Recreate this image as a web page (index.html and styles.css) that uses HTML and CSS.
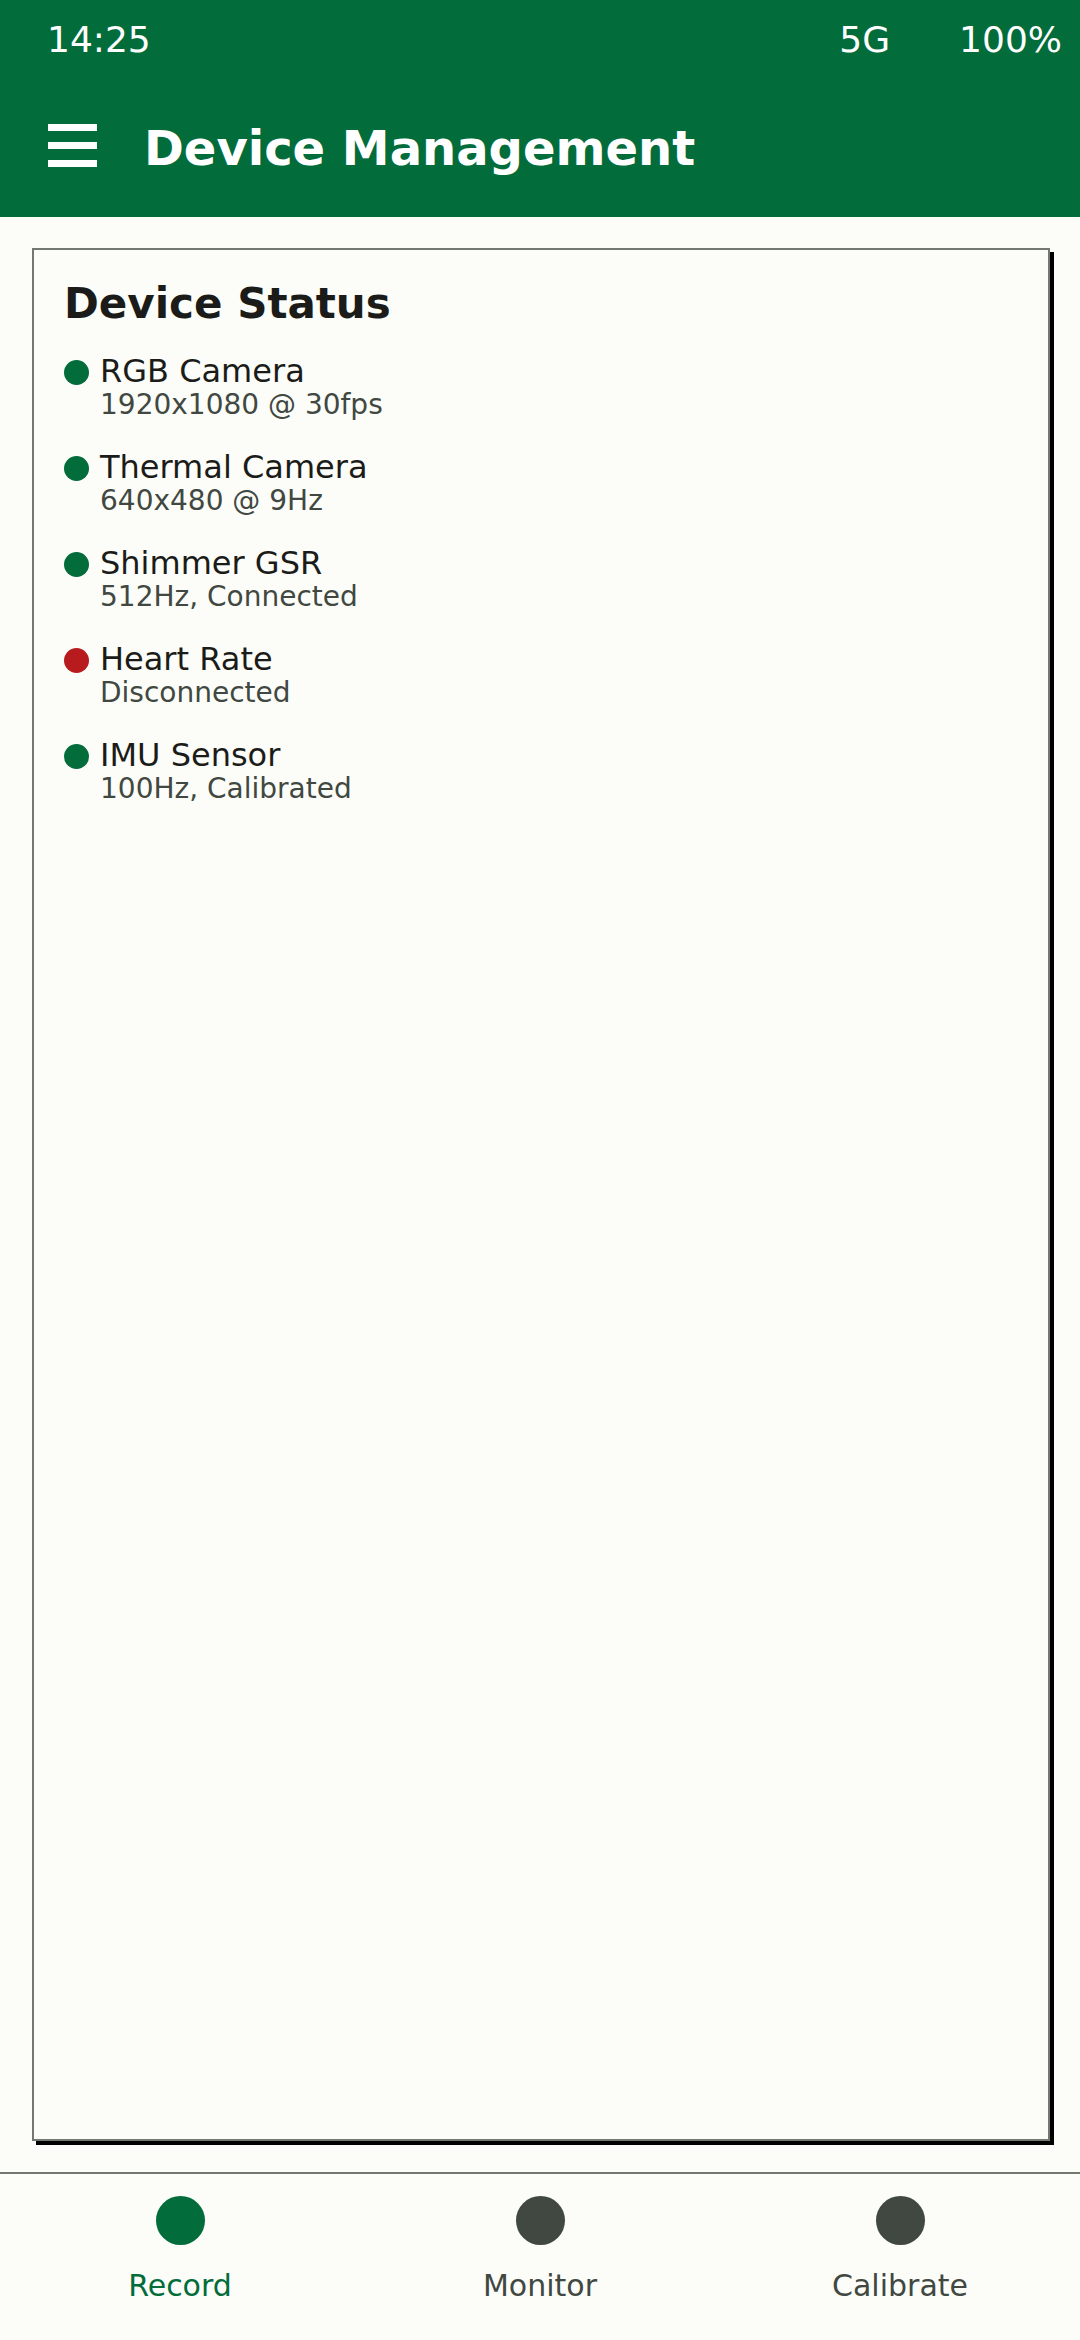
FILE: index.html
```html
<!DOCTYPE html>
<html lang="en">
<head>
<meta charset="utf-8">
<title>Device Management</title>
<link rel="stylesheet" href="styles.css">
</head>
<body>
<div class="app">
  <header class="appbar">
    <div class="statusbar">
      <span class="time">14:25</span>
      <span class="spacer"></span>
      <span class="net">5G</span>
      <span class="battery">100%</span>
    </div>
    <div class="toolbar">
      <div class="menu" aria-label="Menu"><span></span><span></span><span></span></div>
      <h1 class="title">Device Management</h1>
    </div>
  </header>
  <main class="content">
    <section class="card">
      <h2 class="card-title">Device Status</h2>
      <ul class="devices">
        <li class="device"><span class="dot ok"></span><div class="info"><div class="name">RGB Camera</div><div class="detail">1920x1080 @ 30fps</div></div></li>
        <li class="device"><span class="dot ok"></span><div class="info"><div class="name">Thermal Camera</div><div class="detail">640x480 @ 9Hz</div></div></li>
        <li class="device"><span class="dot ok"></span><div class="info"><div class="name">Shimmer GSR</div><div class="detail">512Hz, Connected</div></div></li>
        <li class="device"><span class="dot err"></span><div class="info"><div class="name">Heart Rate</div><div class="detail">Disconnected</div></div></li>
        <li class="device"><span class="dot ok"></span><div class="info"><div class="name">IMU Sensor</div><div class="detail">100Hz, Calibrated</div></div></li>
      </ul>
    </section>
  </main>
  <nav class="bottomnav">
    <div class="tab active"><span class="tab-icon"></span><span class="tab-label">Record</span></div>
    <div class="tab"><span class="tab-icon"></span><span class="tab-label">Monitor</span></div>
    <div class="tab"><span class="tab-icon"></span><span class="tab-label">Calibrate</span></div>
  </nav>
</div>
</body>
</html>
```
FILE: styles.css
```css
* { box-sizing: border-box; }
html, body { margin: 0; padding: 0; }
body {
  background: #fcfdf8;
  font-family: "DejaVu Sans", "Liberation Sans", sans-serif;
  color: #1b1c19;
}
.app {
  width: 1080px;
  height: 2340px;
  display: flex;
  flex-direction: column;
}
.appbar {
  background: #026c3b;
  color: #ffffff;
  height: 217px;
  flex: none;
}
.statusbar {
  display: flex;
  height: 61px;
  padding: 19px 18px 0 47px;
  font-size: 36px;
  line-height: 42px;
}
.spacer { flex: 1; }
.battery { margin-left: 69px; }
.toolbar {
  display: flex;
  align-items: flex-start;
  height: 156px;
  padding: 59px 0 0 48px;
}
.menu {
  width: 49px;
  height: 43px;
  margin-top: 4px;
  display: flex;
  flex-direction: column;
  justify-content: space-between;
}
.menu span {
  display: block;
  height: 7px;
  background: #ffffff;
}
.title {
  margin: 0 0 0 47px;
  font-size: 48px;
  line-height: 56px;
  font-weight: bold;
}
.content {
  flex: 1;
  display: flex;
  flex-direction: column;
  padding: 31px 30px 31px 32px;
}
.card {
  flex: 1;
  background: #fcfdf8;
  border: 2px solid #737970;
  box-shadow: 4px 4px 0 #000000;
  padding: 30px 30px 30px 30px;
}
.card-title {
  margin: 0 0 25px 0;
  font-size: 42px;
  line-height: 48px;
  font-weight: bold;
  color: #1b1c19;
}
.devices {
  list-style: none;
  margin: 0;
  padding: 0;
  display: flex;
  flex-direction: column;
  gap: 29px;
}
.device {
  display: flex;
  align-items: flex-start;
}
.dot {
  width: 25px;
  height: 25px;
  border-radius: 50%;
  margin-top: 7px;
  margin-right: 11px;
  flex: none;
}
.dot.ok { background: #026c3b; }
.dot.err { background: #b81b1e; }
.name {
  font-size: 32px;
  line-height: 36px;
  color: #1b1c19;
}
.detail {
  font-size: 28px;
  line-height: 31px;
  color: #414842;
}
.bottomnav {
  flex: none;
  height: 168px;
  border-top: 2px solid #737970;
  display: grid;
  grid-template-columns: 1fr 1fr 1fr;
}
.tab {
  display: flex;
  flex-direction: column;
  align-items: center;
  padding-top: 22px;
  color: #414842;
}
.tab-icon {
  width: 49px;
  height: 49px;
  border-radius: 50%;
  background: #414842;
}
.tab-label {
  margin-top: 23px;
  font-size: 30px;
  line-height: 35px;
}
.tab.active { color: #026c3b; }
.tab.active .tab-icon { background: #026c3b; }
```
